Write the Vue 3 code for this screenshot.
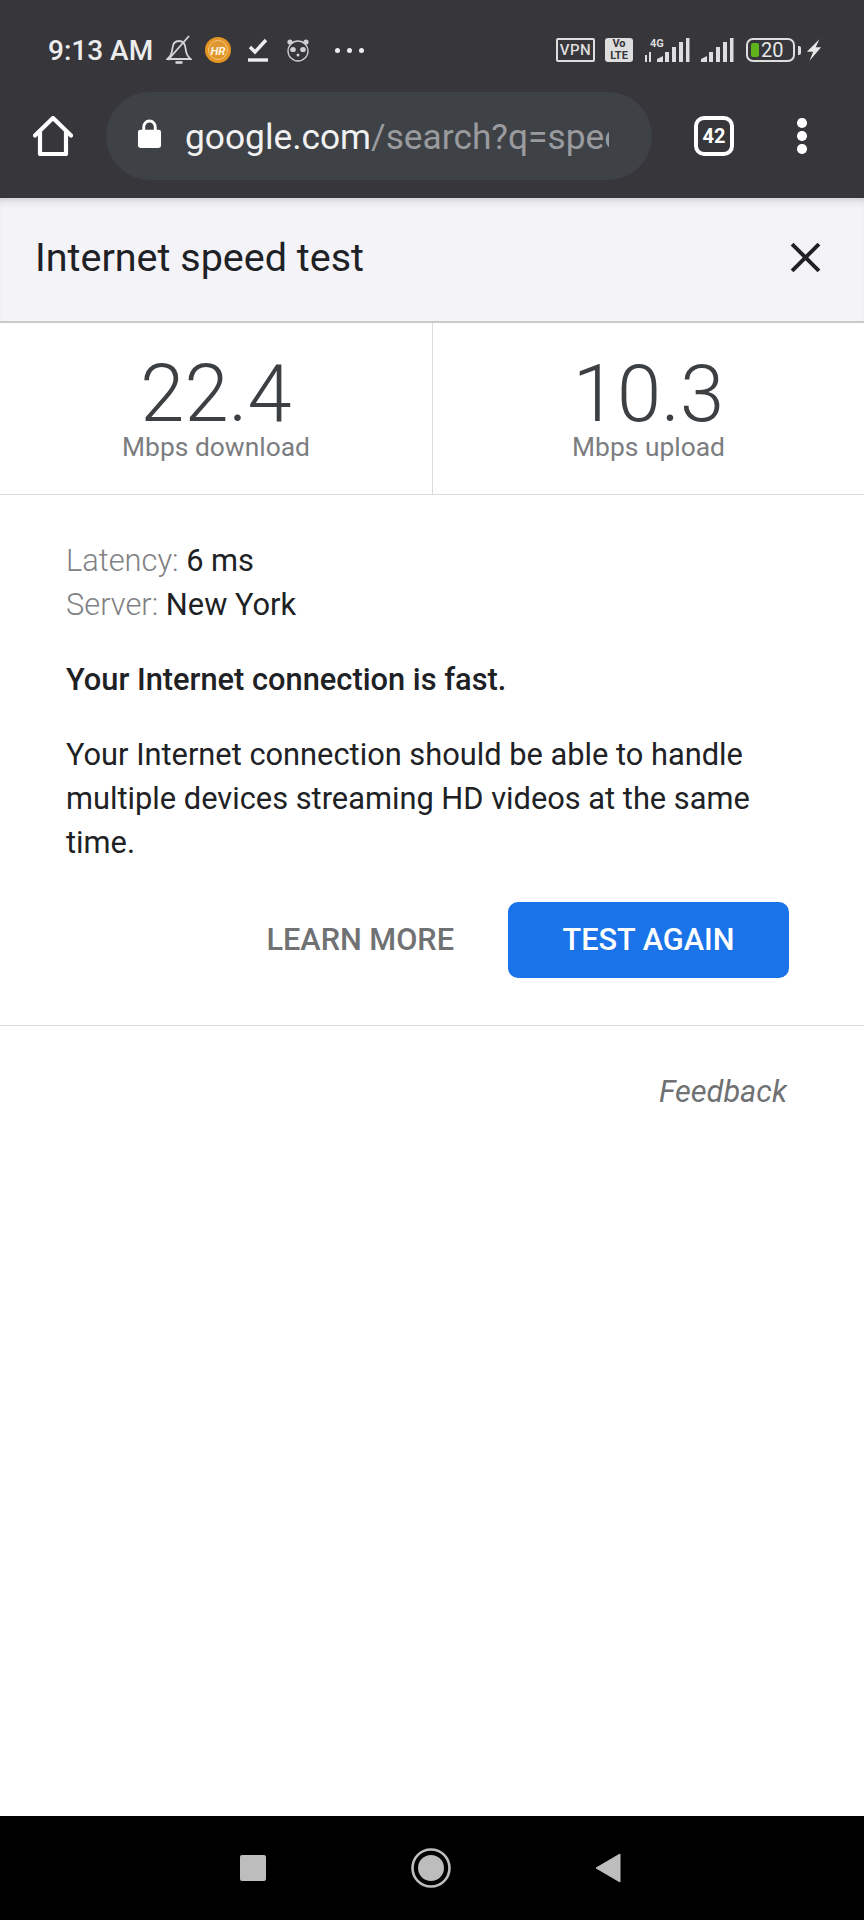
<template>
  <div class="page">
    <header class="chrome">
      <div class="status">
        <div class="status-left">
          <span class="time">9:13 AM</span>
          <svg class="ic bell" viewBox="0 0 26 30" width="26" height="30" fill="none" stroke="#d6d6d6" stroke-width="1.8">
            <path d="M1.500 24c3-2.500 4.500-5 5-11 .4-4.500 3-7 6.500-7s6 2.500 6.500 7c.5 6 2 8.500 5 11z" />
            <path d="M9.500 27.500h7" stroke-width="2.600" />
            <path d="M2 25 23 1" />
          </svg>
          <svg class="ic coin" viewBox="0 0 26 26" width="26" height="26">
            <defs>
              <radialGradient id="coinFill" cx="50%" cy="45%" r="60%">
                <stop offset="0" stop-color="#d99a3a" />
                <stop offset="1" stop-color="#e8921c" />
              </radialGradient>
            </defs>
            <circle cx="13" cy="13" r="13" fill="url(#coinFill)" />
            <circle cx="13" cy="13" r="9.500" fill="none" stroke="#f2c67e" stroke-width="1" />
            <text x="13" y="17.500" text-anchor="middle" class="coin-text">HR</text>
          </svg>
          <svg class="ic check" viewBox="0 0 20 24" width="20" height="24" fill="none" stroke="#eeeeee">
            <path d="M2 9l5 5L18 2" stroke-width="3.400" />
            <path d="M0 22h20" stroke-width="3.400" />
          </svg>
          <svg class="ic panda" viewBox="0 0 24 24" width="24" height="24" fill="none" stroke="#d0d0d0" stroke-width="1.300">
            <circle cx="12" cy="13" r="10" />
            <circle cx="4" cy="4" r="2.600" fill="#d0d0d0" stroke="none" />
            <circle cx="20" cy="4" r="2.600" fill="#d0d0d0" stroke="none" />
            <ellipse cx="7" cy="11.500" rx="2.800" ry="2.600" fill="#d0d0d0" stroke="none" />
            <ellipse cx="17" cy="11.500" rx="2.800" ry="2.600" fill="#d0d0d0" stroke="none" />
            <circle cx="12" cy="17" r="1.500" fill="#d0d0d0" stroke="none" />
          </svg>
          <div class="dots-h"><i></i><i></i><i></i></div>
        </div>
        <div class="status-right">
          <span class="vpn">VPN</span>
          <span class="volte">Vo<br />LTE</span>
          <svg class="ic sig1" viewBox="0 0 46 26" width="46" height="26" fill="#dedede">
            <text x="6" y="10" class="four-g">4G</text>
            <path d="M1 18h2v7H1zM5 15h2v10H5z" />
            <path d="M13 25v-3l6-3v6zM21 25v-10h4v10zM28 25v-15h4v15zM35 25v-20h4v20z" />
            <path d="M42 25V1h3.500v24z" />
          </svg>
          <svg class="ic sig2" viewBox="0 0 33 26" width="33" height="26" fill="#dedede">
            <path d="M0 25v-3l6-3v6zM8 25v-10h4v10zM15 25v-15h4v15zM22 25v-20h4v20zM29 25V1h3.500v24z" />
          </svg>
          <div class="battery">
            <div class="batt-body"><i class="batt-fill"></i><span>20</span></div>
            <i class="batt-tip"></i>
          </div>
          <svg class="ic bolt" viewBox="0 0 18 26" width="16" height="24" fill="#e8e8e8">
            <path d="M15 1 1 15h7l-4 10L17 10h-6z" />
          </svg>
        </div>
      </div>
      <div class="toolbar">
        <svg class="home" viewBox="0 0 40 40" width="40" height="40" fill="none" stroke="#fff" stroke-width="4.200" stroke-linejoin="round" stroke-linecap="round">
          <path d="M2 19.500 20 2l18 17.500" />
          <path d="M7 16v22h26V16" />
        </svg>
        <div class="omnibox">
          <svg class="lock" viewBox="0 0 26 32" width="25" height="31">
            <path d="M7 13V9a6 6 0 0 1 12 0v4" fill="none" stroke="#fff" stroke-width="3" />
            <rect x="1" y="12" width="24" height="19" rx="2.500" fill="#fff" />
          </svg>
          <div class="url"><span class="host">google.com</span><span class="path">/search?q=speed</span></div>
        </div>
        <div class="tabs">42</div>
        <div class="dots-v"><i></i><i></i><i></i></div>
      </div>
    </header>

    <main class="content">
      <div class="title-bar">
        <h1>Internet speed test</h1>
        <svg class="close" viewBox="0 0 30 30" width="31" height="31" fill="none" stroke="#202124" stroke-width="3.800">
          <path d="M2 2l26 26M28 2 2 28" />
        </svg>
      </div>
      <section class="stats">
        <div class="stat divided">
          <div class="value">22.4</div>
          <div class="label">Mbps download</div>
        </div>
        <div class="stat">
          <div class="value">10.3</div>
          <div class="label">Mbps upload</div>
        </div>
      </section>
      <section class="details">
        <div class="meta"><span class="muted">Latency:</span> 6 ms</div>
        <div class="meta"><span class="muted">Server:</span> New York</div>
        <p class="verdict">Your Internet connection is fast.</p>
        <p class="desc">Your Internet connection should be able to handle multiple devices streaming HD videos at the same time.</p>
        <div class="actions">
          <span class="learn">LEARN MORE</span>
          <span class="again">TEST AGAIN</span>
        </div>
      </section>
      <div class="feedback">Feedback</div>
    </main>

    <footer class="navbar">
      <i class="nav-square"></i>
      <svg viewBox="0 0 40 40" width="40" height="40">
        <circle cx="20" cy="20" r="18.500" fill="none" stroke="#bdbdbd" stroke-width="2.600" />
        <circle cx="20" cy="20" r="13" fill="#bdbdbd" />
      </svg>
      <svg class="nav-back" viewBox="0 0 26 30" width="26" height="30">
        <path d="M1 15 25 1v28z" fill="#bdbdbd" stroke="#bdbdbd" stroke-linejoin="round" />
      </svg>
    </footer>
  </div>
</template>

<script setup>
</script>

<style>
html, body { margin: 0; background: #fff; }
</style>

<style scoped>
.page {
  width: 864px;
  height: 1920px;
  display: flex;
  flex-direction: column;
  font-family: Roboto, "Liberation Sans", sans-serif;
  overflow: hidden;
  background: #fff;
}
.chrome {
  height: 198px;
  flex: none;
  background: #36363b;
  box-sizing: border-box;
}
.status {
  height: 92px;
  padding: 30px 42px 0 48px;
  box-sizing: border-box;
  display: flex;
  justify-content: space-between;
  align-items: flex-start;
}
.status-left, .status-right { display: flex; align-items: center; height: 40px; }
.time { font-size: 28px; font-weight: 500; color: #ececec; width: 118px; white-space: nowrap; }
.ic { display: block; flex: none; }
.coin { margin-left: 13px; }
.coin-text { font: italic 700 11.500px Roboto, sans-serif; fill: #fff3dd; }
.check { margin-left: 17px; }
.panda { margin-left: 18px; }
.dots-h { display: flex; gap: 7px; margin-left: 25px; }
.dots-h i { width: 5px; height: 5px; border-radius: 50%; background: #eee; }
.vpn {
  width: 39px; height: 24px; box-sizing: border-box; border: 2px solid #dedede; border-radius: 2px;
  font-size: 15px; font-weight: 500; color: #dedede; letter-spacing: .5px;
  display: flex; align-items: center; justify-content: center;
}
.volte {
  margin-left: 10px; width: 28px; height: 24px; background: #dedede; border-radius: 3px;
  color: #36363b; font-size: 11px; line-height: 12px; font-weight: 700; text-align: center;
}
.sig1 { margin-left: 11px; }
.sig2 { margin-left: 11px; }
.four-g { font: 700 11px Roboto, sans-serif; }
.battery { margin-left: 12px; display: flex; align-items: center; gap: 3px; }
.batt-body {
  width: 49px; height: 24px; box-sizing: border-box; border: 2.500px solid #dedede; border-radius: 7px;
  display: flex; align-items: center; padding-left: 3px; gap: 2px;
}
.batt-fill { width: 8px; height: 14px; background: #5fb41c; border-radius: 2px; }
.batt-body span { font-size: 20px; color: #e8e8e8; line-height: 1; }
.batt-tip { width: 3px; height: 9px; background: #dedede; border-radius: 0 2px 2px 0; }
.bolt { margin-left: 5px; }
.toolbar {
  height: 88px;
  display: flex;
  align-items: center;
  padding-left: 33px;
}
.home { flex: none; }
.omnibox {
  margin-left: 33px;
  width: 546px;
  height: 88px;
  flex: none;
  box-sizing: border-box;
  padding: 0 43px 0 31px;
  border-radius: 44px;
  background: #3e4145;
  display: flex;
  align-items: center;
}
.lock { flex: none; margin-top: -6px; }
.url {
  margin-left: 23px;
  font-size: 35.300px;
  line-height: 44px;
  white-space: nowrap;
  overflow: hidden;
  min-width: 0;
  flex: 1;
  padding-top: 2px;
}
.host { color: #f1f1f1; }
.path { color: #9a9b9e; }
.tabs {
  margin-left: 42px;
  flex: none;
  border: 4px solid #fff;
  border-radius: 10px;
  width: 32px;
  height: 32px;
  color: #fff;
  font-size: 20px;
  font-weight: 700;
  display: flex;
  align-items: center;
  justify-content: center;
}
.dots-v { margin-left: 63px; display: flex; flex-direction: column; gap: 3.500px; }
.dots-v i { width: 9.500px; height: 9.500px; border-radius: 50%; background: #fff; }
.content { flex: 1; display: flex; flex-direction: column; min-height: 0; }
.title-bar {
  height: 125px;
  flex: none;
  box-sizing: border-box;
  background: #f3f3f8;
  border-bottom: 2px solid #c9c9cc;
  display: flex;
  align-items: center;
  justify-content: space-between;
  padding: 0 43px 5px 35px;
  box-shadow: inset 0 8px 8px -6px #c8c8cc;
}
h1 { margin: 0; font-size: 39.500px; font-weight: 400; color: #202124; }
.stats {
  height: 172px;
  flex: none;
  box-sizing: border-box;
  border-bottom: 1px solid #dadce0;
  display: grid;
  grid-template-columns: 433px 1fr;
}
.stat { text-align: center; padding-top: 32px; }
.divided { border-right: 1px solid #dadce0; }
.value { font-size: 79.500px; font-weight: 300; line-height: 77px; color: #3c4043; }
.label { font-size: 26.400px; line-height: 30px; color: #7b7d80; }
.details {
  box-sizing: border-box;
  height: 531px;
  flex: none;
  padding: 44px 75px 0 66px;
  border-bottom: 1px solid #dadce0;
  font-size: 30.800px;
  line-height: 44px;
  color: #202124;
}
.meta .muted { color: #7f8184; font-weight: 300; }
.verdict { margin: 31px 0 0; font-weight: 500; }
.desc { margin: 31px 0 0; }
.actions {
  margin-top: 37px;
  display: flex;
  align-items: center;
  justify-content: flex-end;
}
.learn { font-size: 30.700px; line-height: 40px; font-weight: 500; color: #6f7173; margin-right: 54px; }
.again {
  width: 281px;
  height: 76px;
  background: #1a73e8;
  border-radius: 10px;
  color: #fff;
  font-size: 30.700px;
  line-height: 40px;
  font-weight: 500;
  display: flex;
  align-items: center;
  justify-content: center;
}
.feedback {
  text-align: right;
  padding: 48px 77px 0 0;
  font-size: 30.700px;
  line-height: 36px;
  font-style: italic;
  color: #6f7173;
}
.navbar {
  height: 104px;
  flex: none;
  background: #000;
  display: flex;
  align-items: center;
  padding: 0 243px 0 240px;
  box-sizing: border-box;
  justify-content: space-between;
}
.nav-square { width: 26px; height: 26px; background: #bdbdbd; border-radius: 2px; }
.nav-back { display: block; }
</style>
